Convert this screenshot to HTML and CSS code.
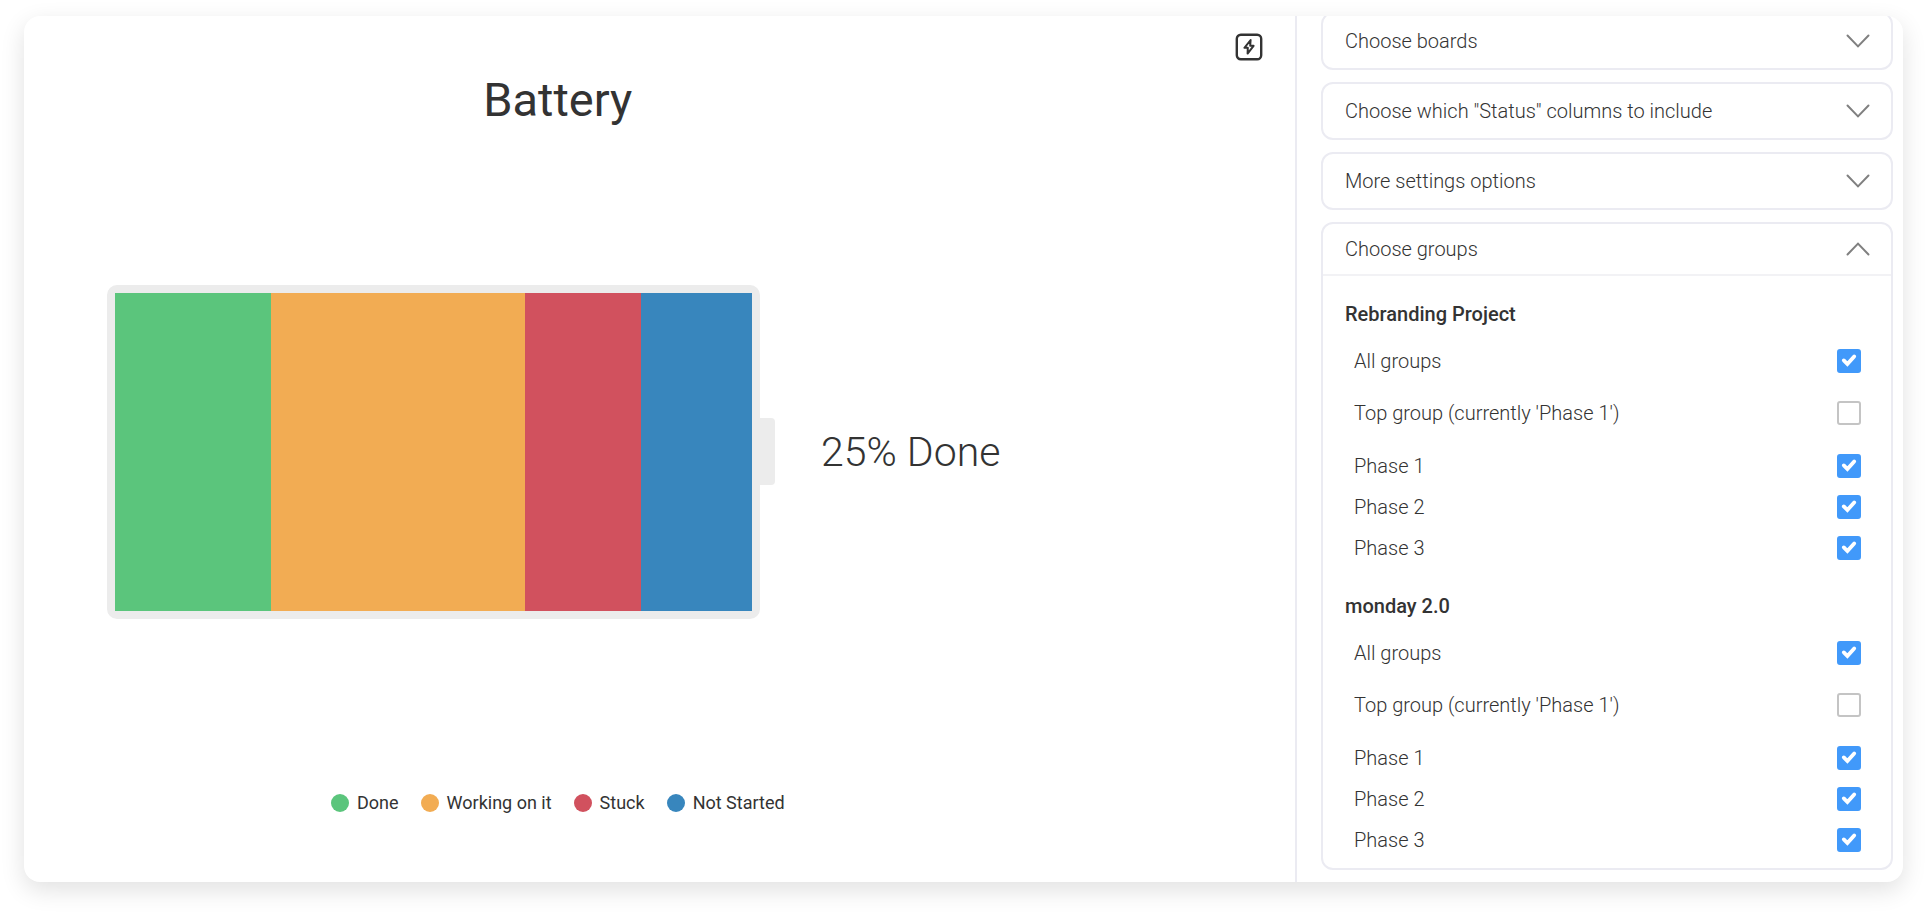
FILE: index.html
```html
<!DOCTYPE html>
<html lang="en">
<head>
    <meta charset="UTF-8">
    <meta name="viewport" content="width=device-width, initial-scale=1.0">
    <title>Battery widget</title>
    <link rel="stylesheet" href="styles.css">
</head>
<body>
    <svg class="sprite" aria-hidden="true">
        <symbol id="check" viewBox="0 0 24 24">
            <path d="M6.8 11.4 L10.4 15 L17.2 7.4" fill="none" stroke="#fff" stroke-width="3.8" stroke-linecap="round"/>
        </symbol>
        <symbol id="chevron" viewBox="0 0 24 14">
            <path d="M1.5 1.5 L12 12.4 L22.5 1.5" fill="none" stroke="#808080" stroke-width="2" stroke-linecap="round"/>
        </symbol>
    </svg>

    <div class="card">
        <main class="widget">
            <button class="bolt-btn" type="button" aria-label="Widget actions">
                <svg viewBox="0 0 28 28" fill="none" stroke="#333" stroke-linejoin="round">
                    <rect x="1.8" y="1.8" width="24.4" height="24.4" rx="4" stroke-width="2.4"/>
                    <path d="M15.6 7 L9.4 14.8 H12.8 L12.6 20.6 L18.6 12.8 H15.2 Z" stroke-width="2"/>
                </svg>
            </button>
            <div class="chart">
                <h1>Battery</h1>
                <div class="battery-row">
                    <div class="battery">
                        <div class="segment done"></div>
                        <div class="segment working"></div>
                        <div class="segment stuck"></div>
                        <div class="segment not-started"></div>
                    </div>
                    <div class="battery-tip"></div>
                    <div class="percent">25% Done</div>
                </div>
                <ul class="legend">
                    <li><span class="dot done"></span>Done</li>
                    <li><span class="dot working"></span>Working on it</li>
                    <li><span class="dot stuck"></span>Stuck</li>
                    <li><span class="dot not-started"></span>Not Started</li>
                </ul>
            </div>
        </main>

        <aside class="settings">
            <section class="panel">
                <button class="panel-header" type="button" aria-expanded="false">Choose boards<svg class="chevron"><use href="#chevron"/></svg></button>
            </section>
            <section class="panel">
                <button class="panel-header" type="button" aria-expanded="false">Choose which "Status" columns to include<svg class="chevron"><use href="#chevron"/></svg></button>
            </section>
            <section class="panel">
                <button class="panel-header" type="button" aria-expanded="false">More settings options<svg class="chevron"><use href="#chevron"/></svg></button>
            </section>
            <section class="panel open">
                <button class="panel-header" type="button" aria-expanded="true">Choose groups<svg class="chevron"><use href="#chevron"/></svg></button>
                <div class="panel-body">
                    <h2>Rebranding Project</h2>
                    <label class="option">All groups<span class="box"><input type="checkbox" checked><svg><use href="#check"/></svg></span></label>
                    <label class="option">Top group (currently 'Phase 1')<span class="box"><input type="checkbox"><svg><use href="#check"/></svg></span></label>
                    <div class="phases">
                        <label class="option">Phase 1<span class="box"><input type="checkbox" checked><svg><use href="#check"/></svg></span></label>
                        <label class="option">Phase 2<span class="box"><input type="checkbox" checked><svg><use href="#check"/></svg></span></label>
                        <label class="option">Phase 3<span class="box"><input type="checkbox" checked><svg><use href="#check"/></svg></span></label>
                    </div>
                    <h2>monday 2.0</h2>
                    <label class="option">All groups<span class="box"><input type="checkbox" checked><svg><use href="#check"/></svg></span></label>
                    <label class="option">Top group (currently 'Phase 1')<span class="box"><input type="checkbox"><svg><use href="#check"/></svg></span></label>
                    <div class="phases">
                        <label class="option">Phase 1<span class="box"><input type="checkbox" checked><svg><use href="#check"/></svg></span></label>
                        <label class="option">Phase 2<span class="box"><input type="checkbox" checked><svg><use href="#check"/></svg></span></label>
                        <label class="option">Phase 3<span class="box"><input type="checkbox" checked><svg><use href="#check"/></svg></span></label>
                    </div>
                </div>
            </section>
        </aside>
    </div>
</body>
</html>
```
FILE: styles.css
```css
* {
    box-sizing: border-box;
}
body {
    font-family: Roboto, sans-serif;
    background: #fff;
    color: #333;
    margin: 0;
    padding: 16px 24px 32px;
    min-height: 100vh;
    display: flex;
}
.sprite {
    display: none;
}
.card {
    flex: 1;
    display: flex;
    background: #fff;
    border-radius: 16px;
    box-shadow: 0 8px 24px rgba(0,0,0,0.12);
    overflow: hidden;
}

/* battery widget */
.widget {
    flex: 1;
    position: relative;
    display: flex;
}
.bolt-btn {
    position: absolute;
    top: 17px;
    right: 32px;
    width: 28px;
    height: 28px;
    padding: 0;
    border: none;
    background: none;
    cursor: pointer;
}
.bolt-btn svg {
    display: block;
    width: 28px;
    height: 28px;
}
.chart {
    width: 84%;
    display: flex;
    flex-direction: column;
    justify-content: space-between;
    padding: 56px 0 67px;
}
h1 {
    margin: 0;
    font-size: 47px;
    font-weight: 400;
    line-height: 56px;
    text-align: center;
}
.battery-row {
    display: flex;
    align-items: center;
    padding: 0 0 16px 83px;
}
.battery {
    flex: 0 1 653px;
    height: 334px;
    display: flex;
    border: 8px solid #ececec;
    border-radius: 10px;
    background: #ececec;
}
.segment.done {
    flex: 156;
}
.segment.working {
    flex: 254;
}
.segment.stuck {
    flex: 116;
}
.segment.not-started {
    flex: 111;
}
.done {
    background: #5bc57c;
}
.working {
    background: #f2ac53;
}
.stuck {
    background: #d1515e;
}
.not-started {
    background: #3886bd;
}
.battery-tip {
    width: 15px;
    height: 67px;
    border-radius: 0 4px 4px 0;
    background: #ececec;
}
.percent {
    margin-left: 46px;
    font-size: 41px;
    font-weight: 300;
    line-height: 48px;
    white-space: nowrap;
}
.legend {
    display: flex;
    justify-content: center;
    gap: 22px;
    margin: 0;
    padding: 0;
    list-style: none;
    font-size: 18px;
    line-height: 24px;
}
.legend li {
    display: flex;
    align-items: center;
    gap: 8px;
}
.dot {
    width: 18px;
    height: 18px;
    border-radius: 50%;
}

/* settings sidebar */
.settings {
    width: 608px;
    padding: 0 10px 12px 24px;
    border-left: 2px solid #ebebf2;
    font-size: 20px;
    font-weight: 300;
}
.panel {
    margin-bottom: 12px;
    border: 2px solid #ebebf2;
    border-radius: 12px;
}
/* the list is scrolled slightly past its top edge */
.panel:first-child {
    margin-top: -4px;
}
.panel:last-child {
    margin-bottom: 0;
}
.panel-header {
    display: flex;
    align-items: center;
    justify-content: space-between;
    width: 100%;
    height: 54px;
    padding: 0 21px 0 22px;
    border: none;
    background: none;
    font: inherit;
    color: inherit;
    cursor: pointer;
}
.chevron {
    width: 24px;
    height: 14px;
}
.open .panel-header {
    height: 52px;
    border-bottom: 2px solid #f2f2f5;
}
.open .chevron {
    transform: rotate(180deg);
}
.panel-body {
    padding: 0 30px 8px 22px;
}
h2 {
    margin: 0;
    padding: 26px 0 9px;
    font-size: 20px;
    font-weight: 500;
    line-height: 24px;
}
.option {
    display: flex;
    align-items: center;
    justify-content: space-between;
    height: 52px;
    padding-left: 9px;
    cursor: pointer;
}
.phases {
    padding-top: 6px;
}
.phases .option {
    height: 41px;
}
.box {
    display: grid;
    width: 24px;
    height: 24px;
}
.box input,
.box svg {
    grid-area: 1 / 1;
    width: 24px;
    height: 24px;
    margin: 0;
}
.box input {
    appearance: none;
    border: 2px solid #c4c4c4;
    border-radius: 3px;
    background: #fff;
    cursor: pointer;
}
.box input:checked {
    border-color: #4199fa;
    background: #4199fa;
}
.box svg {
    visibility: hidden;
    pointer-events: none;
}
.box input:checked + svg {
    visibility: visible;
}
```
